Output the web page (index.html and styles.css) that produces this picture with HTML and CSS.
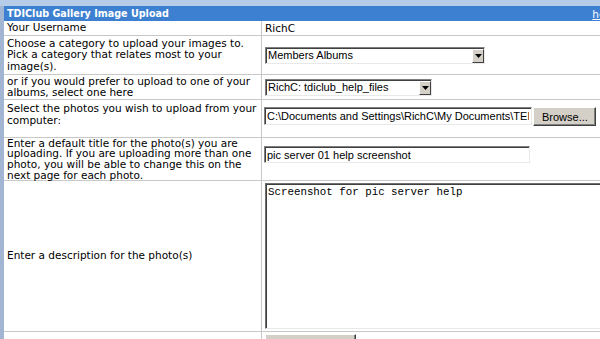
FILE: index.html
```html
<!DOCTYPE html>
<html lang="en">
<head>
    <meta charset="UTF-8">
    <title>TDIClub Gallery Image Upload</title>
    <link rel="stylesheet" href="styles.css">
</head>
<body>
    <div class="topbar"></div>
    <div class="panel">
        <div class="panel-head">
            <span>TDIClub Gallery Image Upload</span>
            <a href="#" class="help-link">help</a>
        </div>

        <form class="upload">
            <!-- username -->
            <div class="label">Your Username</div>
            <div class="field field-text">RichC</div>

            <!-- category -->
            <div class="label">Choose a category to upload your images to. Pick a category that relates most to your image(s).</div>
            <div class="field">
                <div class="dropdown dropdown-wide">
                    <select class="select">
                        <option>Members Albums</option>
                    </select>
                    <span class="dropdown-btn"><svg width="7" height="4" viewBox="0 0 7 4"><path d="M0 0h7L3.5 4z" fill="#000"/></svg></span>
                </div>
            </div>

            <!-- album -->
            <div class="label">or if you would prefer to upload to one of your albums, select one here</div>
            <div class="field">
                <div class="dropdown dropdown-narrow">
                    <select class="select">
                        <option>RichC: tdiclub_help_files</option>
                    </select>
                    <span class="dropdown-btn"><svg width="7" height="4" viewBox="0 0 7 4"><path d="M0 0h7L3.5 4z" fill="#000"/></svg></span>
                </div>
            </div>

            <!-- file -->
            <div class="label label-photos">Select the photos you wish to upload from your computer:</div>
            <div class="field field-photos">
                <input type="text" class="input input-file" value="C:\Documents and Settings\RichC\My Documents\TEMP\picserver01.jpg">
                <button type="button" class="btn btn-browse">Browse...</button>
            </div>

            <!-- title -->
            <div class="label label-title">Enter a default title for the photo(s) you are uploading. If you are uploading more than one photo, you will be able to change this on the next page for each photo.</div>
            <div class="field field-title">
                <input type="text" class="input input-title" value="pic server 01 help screenshot">
            </div>

            <!-- description -->
            <div class="label">Enter a description for the photo(s)</div>
            <div class="field">
                <textarea class="description">Screenshot for pic server help</textarea>
            </div>

            <div class="label label-last"></div>
            <div class="field field-last">
                <button type="submit" class="btn btn-submit">Upload Photos</button>
            </div>
        </form>
    </div>
</body>
</html>
```

FILE: styles.css
```css
:root {
    --head-blue: #3d7fd0;
    --strip-blue: #b6cce9;
    --edge-blue: #a2b6d3;
    --line-color: #c8c8c8;
    --win-grey: #d4d0c8;
}

body {
    margin: 0;
    overflow: hidden;
    background: #fff;
    color: #000;
    font-family: "DejaVu Sans", Verdana, sans-serif;
    font-size: 10.5px;
}

.topbar {
    height: 6px;
    background: var(--strip-blue);
}

.panel {
    width: 614px;
    border-left: 4px solid var(--edge-blue);
}

.panel-head {
    display: flex;
    justify-content: space-between;
    align-items: center;
    height: 15px;
    padding: 0 3px;
    background: var(--head-blue);
    color: #fff;
    font-size: 9.6px;
    font-weight: bold;
}

.help-link {
    color: #fff;
    font-size: 10.5px;
    font-weight: normal;
}

.upload {
    display: grid;
    grid-template-columns: 258px 1fr;
    grid-template-rows: 15px 39px 25px 38px 43px 151px auto;
}

.label {
    display: flex;
    align-items: center;
    padding: 0 2px 0 3px;
    line-height: 11.5px;
    border-right: 1px solid var(--line-color);
    border-bottom: 1px solid var(--line-color);
}

.field {
    display: flex;
    align-items: center;
    padding: 0 2px;
    border-bottom: 1px solid var(--line-color);
}

.field-text {
    padding-left: 3px;
}

.label-photos {
    align-items: flex-start;
    padding-top: 3px;
}

.field-photos {
    align-items: flex-start;
    padding-top: 7px;
}

.label-title {
    line-height: 10.6px;
}

.field-title {
    align-items: flex-start;
    padding-top: 8px;
}

.field-last,
.label-last {
    border-bottom: none;
    padding-top: 2px;
    align-items: flex-start;
}

/* windows classic form controls */
.dropdown {
    position: relative;
    margin-left: 1px;
}

.dropdown-wide .select {
    width: 220px;
}

.dropdown-narrow .select {
    width: 167px;
}

.select {
    display: block;
    appearance: none;
    height: 17px;
    margin: 0;
    padding: 0 0 0 2px;
    font-family: "Liberation Sans", Arial, sans-serif;
    font-size: 11px;
    background: #fff;
    border: 1px solid;
    border-color: #7f7f7f #e9e9e9 #e9e9e9 #7f7f7f;
    box-shadow: inset 1px 1px 0 #404040;
    color: #000;
}

.dropdown-btn {
    position: absolute;
    top: 2px;
    right: 1px;
    bottom: 1px;
    width: 12px;
    display: flex;
    align-items: center;
    justify-content: center;
    background: var(--win-grey);
    border: 1px solid;
    border-color: #fff #404040 #404040 #fff;
    box-sizing: border-box;
}

.input {
    height: 18px;
    box-sizing: border-box;
    margin: 0;
    padding: 0 2px;
    font-family: "Liberation Sans", Arial, sans-serif;
    font-size: 11px;
    border: 1px solid;
    border-color: #7f7f7f #e9e9e9 #e9e9e9 #7f7f7f;
    box-shadow: inset 1px 1px 0 #404040;
    outline: none;
}

.input-file {
    width: 268px;
}

.input-title {
    width: 266px;
    height: 17px;
}

.btn {
    height: 19px;
    margin: 0 0 0 1px;
    padding: 0 8px;
    font-family: "Liberation Sans", Arial, sans-serif;
    font-size: 11px;
    background: var(--win-grey);
    color: #000;
    border: 1px solid;
    border-color: #fff #404040 #404040 #fff;
    box-shadow: inset -1px -1px 0 #808080;
}

.btn-browse {
    width: 63px;
}

.btn-submit {
    width: 91px;
    height: 24px;
    margin-left: 1px;
}

.description {
    width: 351px;
    height: 146px;
    box-sizing: border-box;
    margin: 0 0 0 1px;
    padding: 2px 2px;
    resize: none;
    font-family: "Liberation Mono", "Courier New", monospace;
    font-size: 10.8px;
    border: 1px solid;
    border-color: #6f6f6f #e9e9e9 #e9e9e9 #6f6f6f;
    box-shadow: inset 1px 1px 0 #404040;
    outline: none;
}
```
